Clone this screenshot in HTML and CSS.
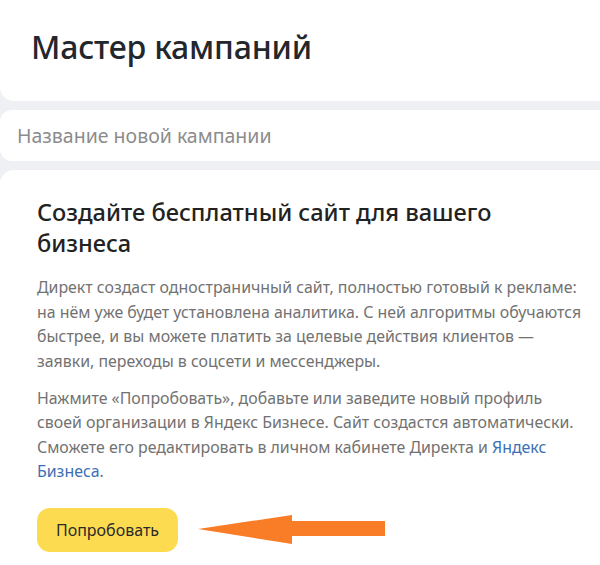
FILE: index.html
```html
<!DOCTYPE html>
<html lang="ru">
<head>
<meta charset="utf-8">
<link rel="stylesheet" href="styles.css">
</head>
<body>
<div class="page">
  <header class="card card-title">
    <h1 class="title">Мастер кампаний</h1>
  </header>
  <div class="card card-input">
    <span class="placeholder">Название новой кампании</span>
  </div>
  <section class="card card-main">
    <h2 class="heading">Создайте бесплатный сайт для вашего бизнеса</h2>
    <p class="text">Директ создаст одностраничный сайт, полностью готовый к рекламе: на нём уже будет установлена аналитика. С ней алгоритмы обучаются быстрее, и вы можете платить за целевые действия клиентов — заявки, переходы в соцсети и мессенджеры.</p>
    <p class="text">Нажмите «Попробовать», добавьте или заведите новый профиль своей организации в Яндекс Бизнесе. Сайт создастся автоматически. Сможете его редактировать в личном кабинете Директа и <a class="link" href="#">Яндекс Бизнеса</a>.</p>
    <div class="actions">
      <button class="btn">Попробовать</button>
      <svg class="arrow" width="190" height="30" viewBox="0 0 190 30" aria-hidden="true">
        <polygon points="0,14 94,0 94,6 187,6 187,21 94,21 94,29" fill="#f97c26"/>
      </svg>
    </div>
  </section>
</div>
</body>
</html>
```
FILE: styles.css
```css
html, body {
  margin: 0;
  padding: 0;
}
body {
  background: #eef0f3;
  font-family: "Noto Sans", "Open Sans", Arial, sans-serif;
  width: 600px;
  height: 565px;
  overflow: hidden;
}
.page {
  width: 630px;
  display: flex;
  flex-direction: column;
  gap: 9px;
}
.card {
  background: #fff;
  border-radius: 14px;
}
.card-title {
  height: 101px;
  border-radius: 0 0 14px 14px;
  padding: 27px 0 0 31px;
  box-sizing: border-box;
}
.title {
  margin: 0;
  font-size: 32px;
  line-height: 40px;
  font-weight: 500;
  color: #23262b;
  letter-spacing: -0.2px;
}
.card-input {
  height: 51px;
  display: flex;
  align-items: center;
  padding-left: 17px;
  border-radius: 12px;
}
.placeholder {
  font-size: 19.5px;
  color: #8c8c8c;
}
.card-main {
  padding: 27px 36px 40px 37px;
  min-height: 380px;
}
.heading {
  margin: 0 0 16px;
  width: 480px;
  font-size: 23.6px;
  line-height: 31px;
  font-weight: 500;
  color: #222;
}
.text {
  margin: 0 0 12.5px;
  width: 548px;
  font-size: 15.9px;
  line-height: 24.5px;
  color: #727272;
}
.link {
  color: #3d6fb5;
  text-decoration: none;
}
.actions {
  margin-top: 24px;
  display: flex;
  align-items: center;
  gap: 20px;
}
.btn {
  width: 141px;
  height: 44px;
  border: none;
  border-radius: 13px;
  background: #fddb51;
  font-family: inherit;
  font-size: 16px;
  color: #2a2a2a;
  padding: 0;
}
.arrow {
  display: block;
}
```
